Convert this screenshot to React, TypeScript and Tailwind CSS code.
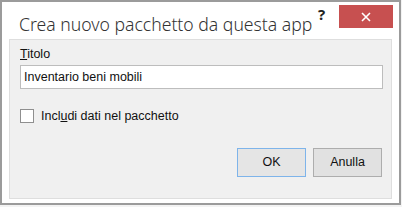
export default function App() {
  return (
    <div className="w-[402px] h-[207px] bg-[#f3f3f3]" style={{ fontFamily: '"Noto Sans", "Open Sans", sans-serif' }}>
      <div className="w-[401px] h-[205px] border-2 border-[#9b9b9b] bg-white flex flex-col">
        {/* barra titolo */}
        <div className="h-[37px] flex items-start relative">
          <span className="ml-[17px] mt-[11px] text-[17.6px] leading-[22px] text-[#333] font-light whitespace-nowrap">
            Crea nuovo pacchetto da questa app
          </span>
          <span className="absolute left-[316px] top-[5px] text-[15px] font-bold text-[#222] leading-none">?</span>
          <button className="absolute left-[337px] top-[3px] w-[54px] h-[23px] bg-[#c75050] flex items-center justify-center">
            <svg width="10" height="10" viewBox="0 0 10 10">
              <path d="M1 1L9 9M9 1L1 9" stroke="white" strokeWidth="1.6" />
            </svg>
          </button>
        </div>
        {/* pannello */}
        <div
          className="mx-[7px] mb-[4px] flex-1 bg-[#f0f0f0] border border-[#dedede] flex flex-col pl-[10px] pr-[8px] text-[12.5px] text-[#111]"
          style={{ fontFamily: '"Liberation Sans", Arial, sans-serif' }}
        >
          <label className="mt-[6px] leading-[16px]">
            <span className="underline">T</span>itolo
          </label>
          <div className="mt-[3px] h-[24px] bg-white border border-[#bdbdbd] flex items-center pl-[3px] leading-none">
            Inventario beni mobili
          </div>
          <div className="mt-[19px] flex items-center gap-[7px]">
            <span className="w-[14px] h-[14px] bg-white border border-[#8f8f8f]" />
            <span className="leading-[16px]">
              Incl<span className="underline">u</span>di dati nel pacchetto
            </span>
          </div>
          <div className="mt-[24px] flex justify-end gap-[7px] pr-[1px]">
            <button className="w-[69px] h-[29px] bg-[#e5e5e5] border border-[#7eb4ea] text-[12.5px] text-[#111]">OK</button>
            <button className="w-[69px] h-[29px] bg-[#e1e1e1] border border-[#adadad] text-[12.5px] text-[#111]">Anulla</button>
          </div>
        </div>
      </div>
    </div>
  )
}
